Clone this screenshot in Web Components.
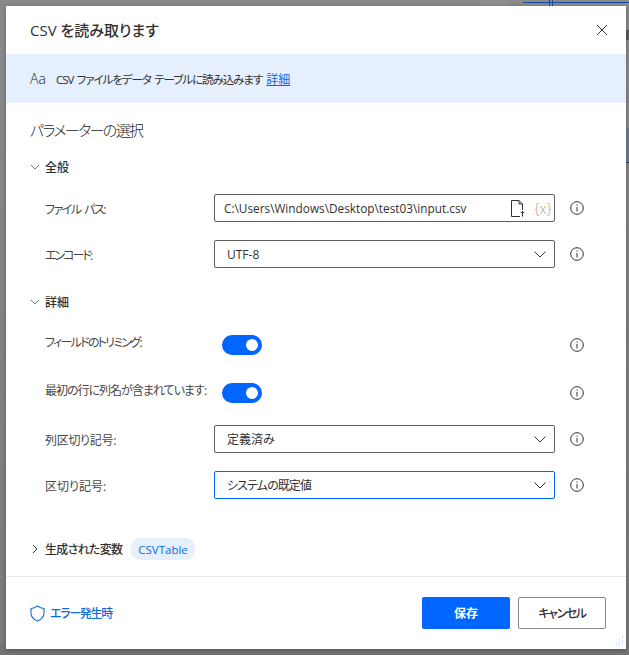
<!DOCTYPE html>
<html lang="ja">
<head>
<meta charset="utf-8">
<style>
  html, body { margin: 0; height: 100%; }
  body {
    background: linear-gradient(#8a8a8a, #7a7a7a);
    font-family: "Open Sans", "Noto Sans CJK JP", sans-serif;
    overflow: hidden;
  }
</style>
</head>
<body>
<app-backdrop></app-backdrop>
<csv-dialog>
  <param-section slot="general" title="全般">
    <param-row label="ファイル パス:" tight="-1.5">
      <file-input value="C:\Users\Windows\Desktop\test03\input.csv"></file-input>
    </param-row>
    <param-row label="エンコード:" tight="-2"><drop-down value="UTF-8"></drop-down></param-row>
  </param-section>
  <param-section slot="details" title="詳細">
    <param-row label="フィールドのトリミング:" kind="toggle" tight="-1.75"><on-toggle></on-toggle></param-row>
    <param-row label="最初の行に列名が含まれています:" kind="toggle" tight="-1"><on-toggle></on-toggle></param-row>
    <param-row label="列区切り記号:" tight="-0.3"><drop-down value="定義済み"></drop-down></param-row>
    <param-row label="区切り記号:"><drop-down value="システムの既定値" tight="-0.9" focused></drop-down></param-row>
  </param-section>
</csv-dialog>

<script>
const FONT = `"Open Sans", "Noto Sans CJK JP", sans-serif`

// the dimmed window behind the dialog, only its edges show
class AppBackdrop extends HTMLElement {
  connectedCallback () {
    this.attachShadow({ mode: 'open' })
    this.shadowRoot.innerHTML = `
      <style>
        :host { position: absolute; inset: 0; display: block; overflow: hidden; }
        i { position: absolute; display: block; }
        .bottom { left: 0; right: 0; top: 645px; bottom: 0; background: #727272; }
        .tab { left: 480px; top: 0; width: 26px; height: 6px; background: #8e8e8e; }
        .line { left: 523px; right: 0; top: 2px; height: 1px; background: #0b4aa6; }
        .v1 { left: 549px; top: 0; width: 1px; height: 6px; background: #0b4aa6; }
        .v2 { left: 552px; top: 0; width: 1px; height: 6px; background: #0b4aa6; }
        .mark { left: 626px; right: 0; top: 30px; height: 10px; background: #5c5c5c; }
        .band { left: 626px; right: 0; top: 128px; height: 34px; background: #6f7a90; }
        .band-line { left: 626px; right: 0; top: 162px; height: 1px; background: #223a66; }
      </style>
      <i class="bottom"></i><i class="tab"></i><i class="line"></i><i class="v1"></i><i class="v2"></i>
      <i class="mark"></i><i class="band"></i><i class="band-line"></i>
    `
  }
}

class CsvDialog extends HTMLElement {
  connectedCallback () {
    this.attachShadow({ mode: 'open' })
    this.shadowRoot.innerHTML = `
      <style>
        :host {
          display: block;
          position: relative;
          box-sizing: border-box;
          width: 620px;
          height: 643px;
          margin: 6px 0 0 6px;
          background: #fff;
          color: #323130;
          font-family: ${FONT};
          font-feature-settings: "palt";
          box-shadow: 0 1px 4px rgba(0, 0, 0, .3);
        }
        .wrap { display: flex; flex-direction: column; height: 100%; position: relative; }
        header {
          box-sizing: border-box;
          height: 48px;
          display: flex;
          align-items: center;
          justify-content: space-between;
          padding: 0 18px 0 24px;
          flex: none;
        }
        h1 { margin: 0; font-size: 15px; font-weight: 500; line-height: 20px; }
        .close { width: 12px; height: 12px; display: block; }
        .banner {
          height: 49px;
          background: #e5effd;
          display: flex;
          align-items: center;
          padding: 0 24px;
          font-size: 12px;
          flex: none;
        }
        .aa { font-size: 14px; font-weight: 300; width: 26px; flex: none; color: #201f1e; }
        .desc { font-size: 11.500px; letter-spacing: -1.05px; word-spacing: 1.500px; }
        .banner a { color: #0f6cdb; text-decoration: underline; margin-left: 4px; }
        h2 {
          margin: 16px 0 16px 24px;
          font-size: 15px;
          letter-spacing: -1.6px;
          font-weight: 300;
          line-height: 22px;
          color: #201f1e;
        }
        main { flex: 1; }
        .vars {
          height: 22px;
          margin: 39px 0 0 24px;
          display: flex;
          align-items: center;
          font-size: 12px;
          font-weight: 500;
        }
        .vars svg { width: 8px; height: 10px; margin-right: 6px; margin-left: 1px; }
        .vars-label { letter-spacing: -.7px; }
        .pill {
          margin-left: 9px;
          height: 22px;
          padding: 0 7px;
          border-radius: 9px;
          background: #e5effd;
          color: #0f6cdb;
          font-size: 11.500px;
          font-weight: 400;
          display: flex;
          align-items: center;
        }
        footer {
          flex: none;
          height: 72px;
          border-top: 1px solid #e8e8e8;
          display: flex;
          align-items: center;
          padding: 0 20px 0 24px;
        }
        .err { display: flex; align-items: center; gap: 5px; color: #0f6cdb; font-size: 12px; font-weight: 500; letter-spacing: -1.3px; }
        .err svg { width: 15px; height: 17px; }
        .spacer { flex: 1; }
        button {
          box-sizing: border-box;
          width: 88px;
          height: 32px;
          border-radius: 2px;
          font-family: ${FONT};
          font-size: 12px;
          font-weight: 700;
          font-feature-settings: "palt";
        }
        .save { background: #0066ff; border: 0; color: #fff; margin-right: 8px; }
        .cancel { background: #fff; border: 1px solid #8a8886; color: #323130; font-weight: 500; letter-spacing: -1.4px; }
        .grip { position: absolute; right: 2px; bottom: 2px; width: 12px; height: 12px; }
      </style>
      <div class="wrap">
        <header>
          <h1>CSV を読み取ります</h1>
          <svg class="close" viewBox="0 0 12 12" fill="none" stroke="#323130"><path d="M1 1l10 10M11 1L1 11"/></svg>
        </header>
        <div class="banner">
          <span class="aa">Aa</span>
          <span class="desc">CSV ファイルをデータ テーブルに読み込みます</span>
          <a>詳細</a>
        </div>
        <main>
          <h2>パラメーターの選択</h2>
          <slot name="general"></slot>
          <slot name="details"></slot>
          <div class="vars">
            <svg viewBox="0 0 8 10" fill="none" stroke="#323130"><path d="M2 1l4 4-4 4"/></svg>
            <span class="vars-label">生成された変数</span>
            <span class="pill">CSVTable</span>
          </div>
        </main>
        <footer>
          <span class="err">
            <svg viewBox="0 0 15 17" fill="none" stroke="#0f6cdb" stroke-width="1.1"><path d="M7.500 1c2 1.500 4 2.300 6.500 2.500V8c0 3.700-2.500 6.500-6.500 8C3.500 14.500 1 11.700 1 8V3.500C3.500 3.300 5.500 2.500 7.500 1z"/></svg>
            エラー発生時
          </span>
          <span class="spacer"></span>
          <button class="save">保存</button>
          <button class="cancel">キャンセル</button>
        </footer>
        <svg class="grip" viewBox="0 0 12 12" fill="none" stroke="#c3cde0" stroke-dasharray="1 1"><path d="M10.500 1v10M7.500 4v7M4.500 7v4M1.500 9v2"/></svg>
      </div>
    `
  }
}

class ParamSection extends HTMLElement {
  connectedCallback () {
    this.attachShadow({ mode: 'open' })
    this.shadowRoot.innerHTML = `
      <style>
        :host { display: block; margin-bottom: 24px; }
        .head {
          height: 20px;
          margin-left: 24px;
          display: flex;
          align-items: center;
          font-size: 12px;
          font-weight: 500;
          margin-bottom: 17px;
        }
        svg { width: 10px; height: 6px; margin-right: 5px; }
        .rows { display: flex; flex-direction: column; gap: 18px; }
      </style>
      <div class="head">
        <svg viewBox="0 0 10 6" fill="none" stroke="#7a7876"><path d="M1 1l4 4 4-4"/></svg>
        <span>${this.getAttribute('title')}</span>
      </div>
      <div class="rows"><slot></slot></div>
    `
  }
}

class ParamRow extends HTMLElement {
  connectedCallback () {
    const tight = this.getAttribute('tight') || 0
    this.attachShadow({ mode: 'open' })
    this.shadowRoot.innerHTML = `
      <style>
        :host {
          display: grid;
          grid-template-columns: 169px 341px 29px;
          margin-left: 39px;
          align-items: center;
          font-size: 12px;
          color: #484644;
          white-space: nowrap;
        }
        :host([kind="toggle"]) { height: 32px; margin-bottom: -2px; }
        .label { padding-top: 2px; letter-spacing: ${tight}px; word-spacing: 2px; }
        :host([kind="toggle"]) .label { padding: 0 0 6px; }
        .info { width: 14px; height: 14px; justify-self: end; display: block; }
      </style>
      <span class="label">${this.getAttribute('label')}</span>
      <div><slot></slot></div>
      <svg class="info" viewBox="0 0 14 14" fill="none" stroke="#323130"><circle cx="7" cy="7" r="6.300"/><path d="M7 6v4.500M7 3.500v1.200"/></svg>
    `
  }
}

class DropDown extends HTMLElement {
  connectedCallback () {
    const tight = this.getAttribute('tight') || 0
    this.attachShadow({ mode: 'open' })
    this.shadowRoot.innerHTML = `
      <style>
        :host {
          display: flex;
          box-sizing: border-box;
          height: 28px;
          border: 1px solid #605e5c;
          border-radius: 2px;
          align-items: center;
          justify-content: space-between;
          padding: 0 8px 0 12px;
          font-size: 12px;
          color: #323130;
          background: #fff;
        }
        :host([focused]) { border-color: #0066ff; }
        span { letter-spacing: ${tight}px; }
        svg { width: 12px; height: 7px; }
      </style>
      <span>${this.getAttribute('value')}</span>
      <svg viewBox="0 0 12 7" fill="none" stroke="#323130"><path d="M.5.500l5.500 5.500L11.500.500"/></svg>
    `
  }
}

class FileInput extends HTMLElement {
  connectedCallback () {
    this.attachShadow({ mode: 'open' })
    this.shadowRoot.innerHTML = `
      <style>
        :host {
          display: flex;
          box-sizing: border-box;
          height: 28px;
          border: 1px solid #605e5c;
          border-radius: 2px;
          align-items: center;
          padding: 0 1px 0 9px;
          font-size: 11.800px;
          color: #323130;
          white-space: nowrap;
        }
        span { flex: 1; }
        .file { width: 14px; height: 17px; margin-right: 8px; flex: none; }
        .x { flex: none; color: #a19f9d; font-size: 14px; font-weight: 300; width: 20px; text-align: center; }
      </style>
      <span>${this.getAttribute('value')}</span>
      <svg class="file" viewBox="0 0 14 17" fill="none" stroke="#323130"><path d="M9 16.500H.5V.500h7.500l3.500 3.500v6M8 .500V4h3.500M11.500 16.500v-5M9.800 13l1.700-1.700 1.700 1.700"/></svg>
      <span class="x">{x}</span>
    `
  }
}

class OnToggle extends HTMLElement {
  connectedCallback () {
    this.attachShadow({ mode: 'open' })
    this.shadowRoot.innerHTML = `
      <style>
        :host {
          display: flex;
          box-sizing: border-box;
          width: 40px;
          height: 20px;
          margin-left: 8px;
          border-radius: 10px;
          background: #0066ff;
          align-items: center;
          justify-content: flex-end;
          padding-right: 4px;
        }
        i { display: block; width: 12px; height: 12px; border-radius: 50%; background: #fff; }
      </style>
      <i></i>
    `
  }
}

customElements.define('app-backdrop', AppBackdrop)
customElements.define('csv-dialog', CsvDialog)
customElements.define('param-section', ParamSection)
customElements.define('param-row', ParamRow)
customElements.define('drop-down', DropDown)
customElements.define('file-input', FileInput)
customElements.define('on-toggle', OnToggle)
</script>
</body>
</html>
